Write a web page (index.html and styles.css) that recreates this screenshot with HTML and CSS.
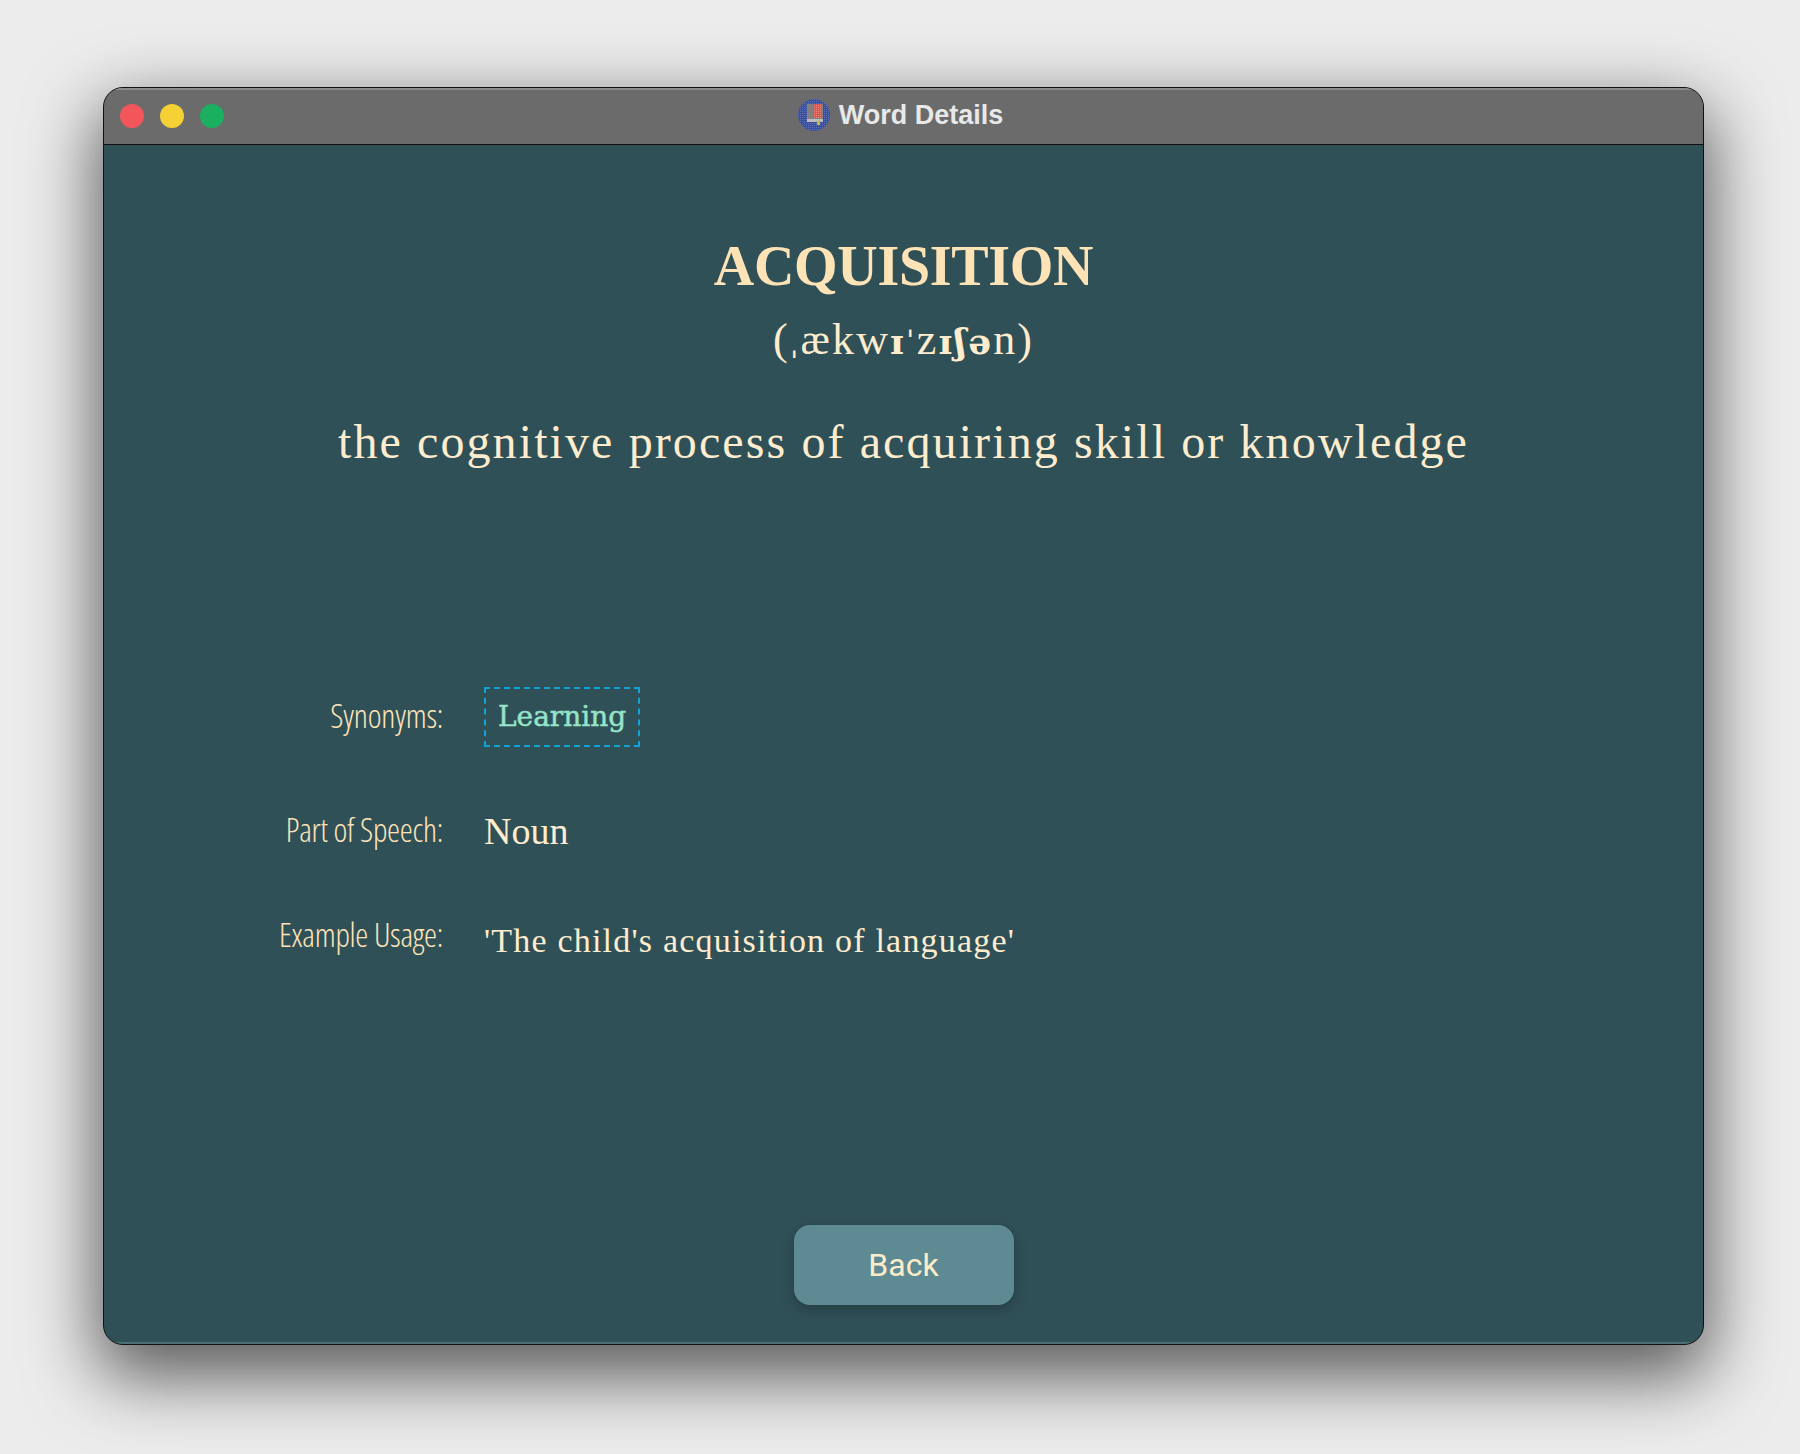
FILE: index.html
```html
<!DOCTYPE html>
<html lang="en">
<head>
<meta charset="UTF-8">
<meta name="viewport" content="width=device-width, initial-scale=1.0">
<title>Word Details</title>
<link rel="stylesheet" href="styles.css">
</head>
<body>
    <div class="window">
        <div class="titlebar">
            <div class="lights">
                <span class="light red"></span>
                <span class="light yellow"></span>
                <span class="light green"></span>
            </div>
            <div class="window-title">
                <svg class="app-icon" width="32" height="32" viewBox="0 0 32 32">
                    <defs>
                        <pattern id="dots" width="2" height="2" patternUnits="userSpaceOnUse">
                            <rect width="2" height="2" fill="#3a4f9c"/>
                            <rect width="1" height="1" fill="#5f73b8"/>
                        </pattern>
                        <pattern id="reddots" width="2" height="2" patternUnits="userSpaceOnUse">
                            <rect width="2" height="2" fill="#d9534f"/>
                            <rect width="1" height="1" fill="#e98a7c"/>
                        </pattern>
                    </defs>
                    <circle cx="16" cy="16" r="16" fill="url(#dots)"/>
                    <rect x="9" y="5" width="16" height="17" fill="#85807e"/>
                    <rect x="15" y="5" width="9" height="14" fill="url(#reddots)"/>
                    <rect x="9" y="20" width="16" height="3" fill="#bcbcbc"/>
                    <rect x="19" y="22" width="3" height="4" fill="#cdb23c"/>
                </svg>
                <span>Word Details</span>
            </div>
        </div>
        <div class="content">
            <h1 class="word">ACQUISITION</h1>
            <div class="phonetic">(<span class="ipa">ˌ</span>ækw<span class="ipa-b">ɪ</span><span class="ipa">ˈ</span>z<span class="ipa-b">ɪʃə</span>n)</div>
            <div class="meaning">the cognitive process of acquiring skill or knowledge</div>
            <div class="details">
                <div class="row row-syn">
                    <div class="label">Synonyms:</div>
                    <div class="synonym">Learning</div>
                </div>
                <div class="row row-pos">
                    <div class="label">Part of Speech:</div>
                    <div class="value pos">Noun</div>
                </div>
                <div class="row row-ex">
                    <div class="label">Example Usage:</div>
                    <div class="value example">'The child's acquisition of language'</div>
                </div>
            </div>
            <button class="back">Back</button>
        </div>
    </div>
</body>
</html>
```

FILE: styles.css
```css
html, body {
    margin: 0;
    height: 100%;
}
body {
    background-color: #ececec;
    padding: 87px 0 0 103px;
    box-sizing: border-box;
    overflow: hidden;
}
.window {
    width: 1601px;
    height: 1258px;
    box-sizing: border-box;
    border: 1px solid #111;
    border-radius: 20px;
    overflow: hidden;
    display: flex;
    flex-direction: column;
    background-color: #305058;
    box-shadow: 0 26px 70px 6px rgba(0, 0, 0, 0.62);
}
.titlebar {
    height: 56px;
    flex: none;
    background-color: #6b6b6b;
    border-bottom: 1px solid #111;
    box-shadow: inset 0 2px 0 #8c8c8c;
    position: relative;
    display: flex;
    align-items: center;
    justify-content: center;
}
.lights {
    position: absolute;
    left: 16px;
    top: 16px;
    display: flex;
    gap: 16px;
}
.light {
    width: 24px;
    height: 24px;
    border-radius: 50%;
}
.red { background-color: #f2565b; }
.yellow { background-color: #f5d135; }
.green { background-color: #1bb060; }
.window-title {
    display: flex;
    align-items: center;
    gap: 9px;
    margin-top: -2px;
    padding-right: 6px;
    color: #e8e8e8;
    font: bold 27px "Liberation Sans", Arial, sans-serif;
}
.content {
    flex: 1;
    display: flex;
    flex-direction: column;
    align-items: center;
    color: #fde4b8;
    box-shadow: inset 0 -2px 0 #4d6f76;
}
.word {
    margin: 93px 0 0;
    font: bold 56px/56px "Liberation Serif", serif;
    letter-spacing: -0.3px;
    color: #fde3b5;
}
.phonetic {
    margin-top: 18px;
    font: 44px/56px "Liberation Serif", serif;
    letter-spacing: 2.1px;
    color: #fdeccd;
}
.ipa {
    font-family: "DejaVu Serif", serif;
    font-size: 32px;
}
.ipa-b {
    font-family: "DejaVu Serif", serif;
    font-weight: bold;
    font-size: 36px;
}
.meaning {
    margin-top: 41px;
    font: 48px/60px "Liberation Serif", serif;
    letter-spacing: 2.1px;
    color: #fdeccd;
}
.details {
    align-self: flex-start;
    margin: 215px 0 0 0;
    display: flex;
    flex-direction: column;
}
.row {
    display: flex;
    align-items: center;
}
.row-pos { margin-top: 59px; }
.row-ex { margin-top: 50px; }
.label {
    width: 339px;
    margin-right: 41px;
    padding-bottom: 2px;
    text-align: right;
    font: 300 33px/48px "Open Sans", sans-serif;
    font-stretch: 75%;
    letter-spacing: -0.3px;
    color: #fde4b8;
}
.synonym {
    border: 2px dashed #0fa3d8;
    padding: 0 12px;
    font: 28px/56px "DejaVu Serif", serif;
    -webkit-text-stroke: 0.5px #96e4c8;
    color: #96e4c8;
}
.value {
    font: 34px/48px "Liberation Serif", serif;
    color: #fdeccd;
}
.pos { font-size: 38px; }
.example {
    letter-spacing: 1.2px;
    padding-top: 11px;
}
.back {
    flex: none;
    margin: auto 0 39px;
    width: 220px;
    height: 80px;
    border: none;
    border-radius: 16px;
    background-color: #5e8b93;
    box-shadow: 0 4px 14px rgba(0, 0, 0, 0.25);
    color: #fdecc8;
    font: 32px Roboto, sans-serif;
}
```
